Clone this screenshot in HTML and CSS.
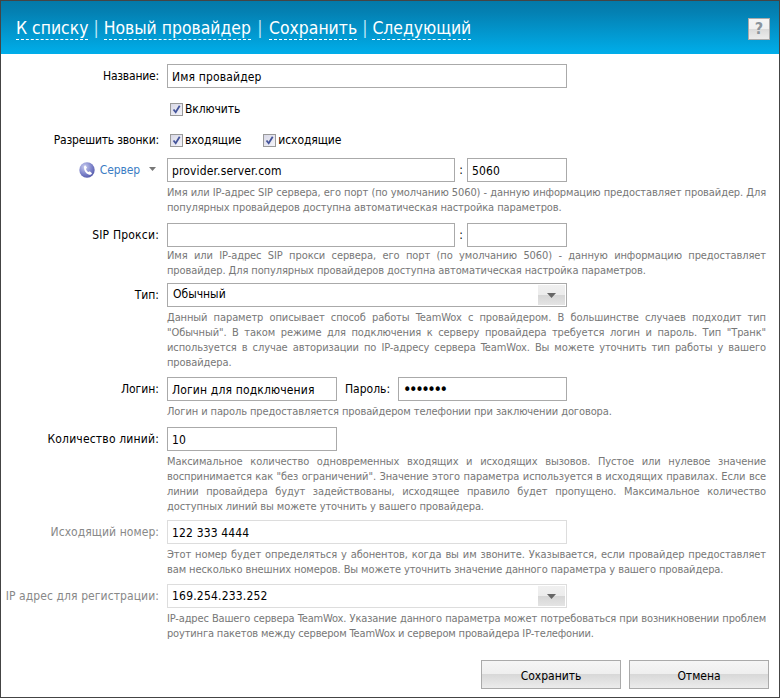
FILE: index.html
```html
<!DOCTYPE html>
<html lang="ru">
<head>
<meta charset="utf-8">
<title>Новый провайдер</title>
<link rel="stylesheet" href="styles.css">
</head>
<body>
<div class="window">
  <header class="topbar">
    <nav class="nav">
      <a class="nav-link">К списку</a><span class="sep">|</span><a class="nav-link">Новый провайдер</a><span class="sep sep-wide">|</span><a class="nav-link">Сохранить</a><span class="sep">|</span><a class="nav-link">Следующий</a>
    </nav>
    <div class="help">?</div>
  </header>
  <form class="form">
    <div class="row r-name"><label class="lbl">Название:</label><input class="inp w400" value="Имя провайдер"></div>
    <div class="row r-enable"><span class="lbl"></span><span class="check-item"><span class="cb"><svg viewBox="0 0 9 9" width="9" height="9"><path d="M1.5 4.5 L3.7 7.3 L7.7 0.8" fill="none" stroke="#44549a" stroke-width="1.8"/></svg></span>Включить</span></div>
    <div class="row r-allow"><span class="lbl">Разрешить звонки:</span><span class="check-item incoming"><span class="cb"><svg viewBox="0 0 9 9" width="9" height="9"><path d="M1.5 4.5 L3.7 7.3 L7.7 0.8" fill="none" stroke="#44549a" stroke-width="1.8"/></svg></span>входящие</span><span class="check-item"><span class="cb"><svg viewBox="0 0 9 9" width="9" height="9"><path d="M1.5 4.5 L3.7 7.3 L7.7 0.8" fill="none" stroke="#44549a" stroke-width="1.8"/></svg></span>исходящие</span></div>

    <div class="row r-server">
      <span class="lbl server-lbl">
        <svg class="phone" viewBox="0 0 16 16" width="16" height="16"><defs><radialGradient id="pg" cx="0.35" cy="0.3" r="0.8"><stop offset="0" stop-color="#c9cdf0"/><stop offset="0.6" stop-color="#7a80c8"/><stop offset="1" stop-color="#4f55a6"/></radialGradient></defs><circle cx="8" cy="8" r="7.7" fill="url(#pg)"/><path d="M6.2 3.2 L8 5.6 L7 7 C7.4 8.4 8.2 9.4 9.4 10 L10.8 9.2 L13 11.2 C12.4 12.6 11 13.2 9.6 12.6 C6.8 11.4 4.9 8.6 5 5.2 C5 4.3 5.4 3.6 6.2 3.2 Z" fill="#fff"/></svg>
        <span class="server-name">Сервер</span>
        <svg class="tri" viewBox="0 0 7 4" width="7" height="4"><path d="M0 0 H7 L3.5 4 Z" fill="#777"/></svg>
      </span>
      <input class="inp w288" value="provider.server.com"><span class="colon">:</span><input class="inp w100" value="5060">
    </div>
    <p class="hint h-server">Имя или IP-адрес SIP сервера, его порт (по умолчанию 5060) - данную информацию предоставляет провайдер. Для популярных провайдеров доступна автоматическая настройка параметров.</p>

    <div class="row r-proxy"><label class="lbl">SIP Прокси:</label><input class="inp w288"><span class="colon">:</span><input class="inp w100"></div>
    <p class="hint h-proxy">Имя или IP-адрес SIP прокси сервера, его порт (по умолчанию 5060) - данную информацию предоставляет провайдер. Для популярных провайдеров доступна автоматическая настройка параметров.</p>

    <div class="row r-type"><label class="lbl">Тип:</label><div class="select"><span class="sel-text">Обычный</span><span class="sel-btn"><svg viewBox="0 0 9 5" width="9" height="5"><path d="M0 0 H9 L4.5 5 Z" fill="#666"/></svg></span></div></div>
    <p class="hint h-type">Данный параметр описывает способ работы TeamWox с провайдером. В большинстве случаев подходит тип "Обычный". В таком режиме для подключения к серверу провайдера требуется логин и пароль. Тип "Транк" используется в случае авторизации по IP-адресу сервера TeamWox. Вы можете уточнить тип работы у вашего провайдера.</p>

    <div class="row r-login"><label class="lbl">Логин:</label><input class="inp w170" value="Логин для подключения"><label class="pass-lbl">Пароль:</label><input class="inp w169 pass" type="password" value="1234567"></div>
    <p class="hint h-login">Логин и пароль предоставляется провайдером телефонии при заключении договора.</p>

    <div class="row r-lines"><label class="lbl">Количество линий:</label><input class="inp w170" value="10"></div>
    <p class="hint h-lines">Максимальное количество одновременных входящих и исходящих вызовов. Пустое или нулевое значение воспринимается как "без ограничений". Значение этого параметра используется в исходящих правилах. Если все линии провайдера будут задействованы, исходящее правило будет пропущено. Максимальное количество доступных линий вы можете уточнить у вашего провайдера.</p>

    <div class="row r-out off"><label class="lbl">Исходящий номер:</label><input class="inp w400" value="122 333 4444"></div>
    <p class="hint h-out">Этот номер будет определяться у абонентов, когда вы им звоните. Указывается, если провайдер предоставляет вам несколько внешних номеров. Вы можете уточнить значение данного параметра у вашего провайдера.</p>

    <div class="row r-ip off"><label class="lbl">IP адрес для регистрации:</label><div class="select"><span class="sel-text">169.254.233.252</span><span class="sel-btn"><svg viewBox="0 0 9 5" width="9" height="5"><path d="M0 0 H9 L4.5 5 Z" fill="#666"/></svg></span></div></div>
    <p class="hint h-ip">IP-адрес Вашего сервера TeamWox. Указание данного параметра может потребоваться при возникновении проблем роутинга пакетов между сервером TeamWox и сервером провайдера IP-телефонии.</p>

    <div class="actions"><button type="button" class="btn">Сохранить</button><button type="button" class="btn">Отмена</button></div>
  </form>
</div>
</body>
</html>
```

FILE: styles.css
```css
* { box-sizing: border-box; }
html, body { margin: 0; padding: 0; background: #fff; }
body {
  font-family: "DejaVu Sans", "Liberation Sans", sans-serif;
  font-stretch: condensed;
  font-size: 12px;
  color: #000;
  width: 780px;
  height: 698px;
  overflow: hidden;
}
.window {
  width: 780px;
  height: 698px;
  border: 1px solid #444;
  background: #fff;
}
.topbar {
  height: 53px;
  display: flex;
  align-items: flex-start;
  justify-content: space-between;
  background: linear-gradient(#0379a8 0%, #0480b2 20%, #00aeea 100%);
  padding: 17px 9px 0 15px;
}
.nav { display: flex; align-items: flex-start; color: #fff; font-size: 17.4px; line-height: 20px; }
.nav-link { border-bottom: 1px dashed #fff; padding-bottom: 1px; height: 22px; }
.sep { color: #bfe6f6; margin: 0 5px; }
.sep-wide { margin: 0 6.5px; }
.help {
  width: 22px;
  height: 22px;
  border: 1px solid #aaa;
  background: linear-gradient(#f4f4f4 0%, #f0f0f0 50%, #dadada 50%, #ececec 100%);
  color: #8a949c;
  font-weight: bold;
  font-size: 16px;
  line-height: 20px;
  text-align: center;
}
.form { padding: 10px 0 0 0; }
.row { display: flex; align-items: center; height: 24px; }
.lbl { width: 158px; margin-right: 8px; text-align: right; flex: none; }
.inp {
  height: 24px;
  border: 1px solid #aaa;
  padding: 1px 4px 0;
  font: inherit;
  font-stretch: condensed;
  letter-spacing: 0.15px;
  color: #000;
  background: #fff;
  outline: none;
  border-radius: 0;
}
.pass { font-size: 16px; letter-spacing: -2.4px; padding-top: 0; }
.w400 { width: 400px; }
.w288 { width: 288px; }
.w100 { width: 100px; }
.w170 { width: 170px; }
.w169 { width: 169px; }
.colon { width: 12px; text-align: center; }
.pass-lbl { width: 61px; text-align: center; }
.check-item { display: inline-flex; align-items: center; letter-spacing: -0.1px; }
.incoming { margin-right: 19px; }
.cb {
  width: 13px;
  height: 13px;
  margin: 0 2px 0 3px;
  border: 1px solid #999;
  background: linear-gradient(135deg, #d8d8e6, #f4f4fa);
  display: flex;
  align-items: center;
  justify-content: center;
}
.r-name .lbl { letter-spacing: -0.2px; }
.r-allow .lbl { letter-spacing: -0.18px; }
.r-lines .lbl { letter-spacing: 0.18px; }
.r-ip .lbl { letter-spacing: 0.08px; }
.r-out .lbl { letter-spacing: 0.06px; }
.r-proxy .lbl { letter-spacing: 0.2px; }
.r-enable { margin-top: 9px; }
.r-allow { margin-top: 7px; }
.r-server { margin-top: 6px; }
.server-lbl { display: flex; align-items: center; justify-content: flex-end; }
.phone { margin-right: 5px; }
.server-name { color: #3b7dc4; margin-right: 9px; letter-spacing: -0.1px; }
.tri { margin-right: 3px; margin-bottom: 3px; }
.hint {
  margin: 3px 13px 0 166px;
  color: #777;
  font-size: 11px;
  line-height: 15px;
  text-align: justify;
  letter-spacing: -0.1px;
}
.h-ip { letter-spacing: -0.16px; }
.r-proxy { margin-top: 8px; }
.h-proxy { margin-top: 1px; }
.r-type { margin-top: 5px; }
.r-login { margin-top: 7px; }
.r-lines { margin-top: 8px; }
.r-out { margin-top: 6px; }
.r-ip { margin-top: 7px; }
.off .lbl { color: #888; }
.off .inp, .off .select { border-color: #ddd; }
.select {
  width: 400px;
  height: 24px;
  border: 1px solid #aaa;
  display: flex;
  justify-content: space-between;
  align-items: stretch;
  background: #fff;
}
.sel-text { padding-left: 5px; line-height: 20px; }
.off .sel-text { line-height: 22px; padding-left: 4px; letter-spacing: 0.2px; }
.sel-btn {
  width: 27px;
  margin: 1px;
  display: flex;
  align-items: center;
  justify-content: center;
  background: linear-gradient(#f0f0f0 0%, #ececec 50%, #d6d6d6 50%, #e4e4e4 100%);
}
.actions { display: flex; justify-content: flex-end; gap: 8px; margin: 19px 10px 0 0; }
.btn {
  width: 140px;
  height: 29px;
  border: 1px solid #aaa;
  font: inherit;
  font-stretch: condensed;
  color: #000;
  padding: 2px 0 0;
  background: linear-gradient(#f5f5f5 0%, #eeeeee 50%, #d8d8d8 50%, #ececec 100%);
}
```
